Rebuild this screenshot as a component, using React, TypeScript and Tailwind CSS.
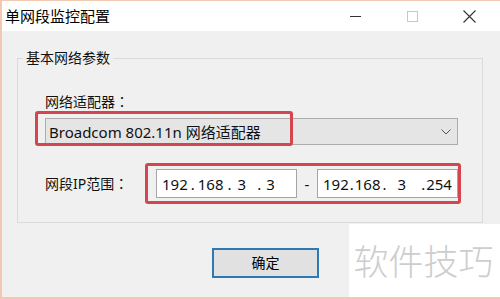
import React from 'react'

const font = "font-[family-name:'Noto_Sans','Noto_Sans_CJK_SC',sans-serif]"

// fullwidth colon centred in its cell, as the dialog font draws it
function Colon() {
  return <span className="font-[family-name:'Noto_Sans_CJK_TC',sans-serif]">：</span>
}

function CaptionButtons() {
  return (
    <div className="flex h-full pr-[2px]">
      <div className="w-[57px] h-full flex items-center justify-center">
        <div className="w-[11px] h-[1px] bg-[#333]" />
      </div>
      <div className="w-[57px] h-full flex items-center justify-center">
        <div className="w-[11px] h-[11px] border border-[#c8c8c8]" />
      </div>
      <div className="w-[57px] h-full flex items-center justify-center">
        <svg width="13" height="13" viewBox="0 0 13 13" fill="none" stroke="#333" strokeWidth="1.1">
          <path d="M0.5 0.5 L12.5 12.5 M12.5 0.5 L0.5 12.5" />
        </svg>
      </div>
    </div>
  )
}

export default function App() {
  return (
    <div className={`${font} relative w-[500px] h-[299px] overflow-hidden bg-[#f0f0f0] border-t border-l-2 border-b-2 border-[#f2c8b0] text-[#111] flex flex-col`}>
      {/* Title bar */}
      <div className="h-[30px] bg-white flex items-center justify-between">
        <span className="pl-[3px] text-[15px] leading-[20px] text-black">单网段监控配置</span>
        <CaptionButtons />
      </div>

      {/* Group box */}
      <fieldset className="mt-[17px] ml-[15px] w-[466px] h-[175px] border border-[#dadada]">
        <legend className="ml-[5px] px-[3px] text-[14px] leading-[20px]">基本网络参数</legend>
        <div className="pl-[27px] pt-[23px]">
          <div className="text-[14px] leading-[20px]">网络适配器<Colon /></div>

          <div className="relative mt-[6px] w-[413px] h-[27px] border border-[#adadad] bg-[#e5e5e5] flex items-center justify-between">
            <span className="pl-[3px] text-[15px] leading-[20px]">Broadcom 802.11n 网络适配器</span>
            <svg className="mr-[6px]" width="10" height="6" viewBox="0 0 10 6" fill="none" stroke="#555" strokeWidth="1">
              <path d="M0.5 0.5 L5 5 L9.5 0.5" />
            </svg>
            <div className="absolute left-[-11px] top-[-8px] w-[258px] h-[35px] border-[3px] border-[#d5454d] rounded-[3px]" />
          </div>

          <div className="mt-[24px] flex items-center h-[29px]">
            <div className="w-[111px] text-[14px] leading-[20px]">网段IP范围<Colon /></div>
            <div className="relative flex items-center">
              <div className="w-[141px] h-[29px] bg-white border border-[#a5a5a5] flex items-center pl-[5px] text-[15px] leading-[20px]">
                <span>192</span>
                <span className="ml-[3px]">.</span>
                <span className="ml-[3px]">168</span>
                <span className="ml-[4px]">.</span>
                <span className="ml-[6px]">3</span>
                <span className="ml-[11px]">.</span>
                <span className="ml-[5px]">3</span>
              </div>
              <div className="w-[20px] text-center text-[15px] leading-[20px]">-</div>
              <div className="w-[141px] h-[29px] bg-white border border-[#a5a5a5] flex items-center pl-[5px] text-[15px] leading-[20px]">
                <span>192</span>
                <span className="ml-[1px]">.</span>
                <span className="ml-[1px]">168</span>
                <span className="ml-[2px]">.</span>
                <span className="ml-[11px]">3</span>
                <span className="ml-[15px]">.</span>
                <span className="ml-[1px]">254</span>
              </div>
              <div className="absolute left-[-11px] top-[-6px] w-[316px] h-[41px] border-[3px] border-[#d5454d] rounded-[3px]" />
            </div>
          </div>
        </div>
      </fieldset>

      {/* OK button */}
      <div className="mt-[25px] ml-[210px]">
        <button className="w-[107px] h-[30px] border-2 border-[#2e78b6] bg-[#e1e1e1] text-[14px] leading-[20px] text-black">
          确定
        </button>
      </div>

      {/* Watermark */}
      <div className="absolute right-0 bottom-[-2px] w-[151px] h-[75px] bg-white flex items-center justify-center">
        <span className="pr-[2px] text-[35px] leading-[40px] font-light text-[#cdcdcd]">软件技巧</span>
      </div>
    </div>
  )
}
